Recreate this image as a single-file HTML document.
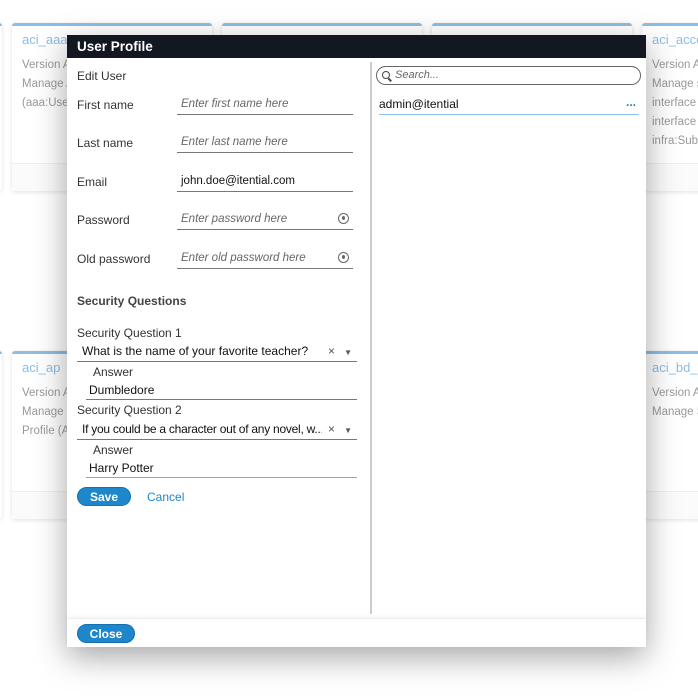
<!DOCTYPE html>
<html><head><style>
*{box-sizing:border-box;margin:0;padding:0}
body{width:698px;height:697px;background:#fff;font-family:"Liberation Sans",sans-serif;position:relative;overflow:hidden;font-size:12px;color:#222}
.card{position:absolute;background:#fff;border-top:3px solid #8dbde2;border-radius:3px;box-shadow:0 1px 4px rgba(0,0,0,.12)}
.card .t{color:#8dbde2;font-size:13px;position:absolute;left:10px;top:6px;white-space:nowrap}
.card .l{color:#999;font-size:11.5px;position:absolute;left:10px;white-space:nowrap}
.card .f{position:absolute;left:0;right:0;bottom:0;height:28px;border-top:1px solid #eee;background:#fbfbfb}
.modal{position:absolute;left:67px;top:35px;width:579px;height:612px;background:#fff;box-shadow:0 10px 30px rgba(0,0,0,.35)}
.hdr{height:23px;background:#131722;color:#fff;font-size:13.5px;font-weight:bold;padding:4px 10px}
.a{position:absolute;white-space:nowrap}
.lbl{font-size:12px;color:#333}
.inp{position:absolute;left:110px;width:176px;border-bottom:1px solid #777;height:21px;font-size:11.5px;padding:4px 4px;color:#666;font-style:italic}
.btn{position:absolute;background:#1e87cc;color:#fff;font-weight:bold;border-radius:10px;font-size:12px;text-align:center;line-height:18px;border:1px solid #1670b0}
.eye{position:absolute;right:4px;top:4px;width:11px;height:11px;border:1.3px solid #666;border-radius:50%}
.eye:after{content:"";position:absolute;left:3px;top:2px;width:3px;height:4px;background:#666;border-radius:50%}
.sel{position:absolute;left:10px;width:280px;height:22px;border-bottom:1px solid #777;font-size:12px;padding:4px 5px;color:#111;white-space:nowrap}
.sel .tx{display:block;width:240px;overflow:hidden;white-space:nowrap}
</style></head><body>
<div class="card" style="left:-190px;top:23px;width:192px;height:168px"></div>
<div class="card" style="left:12px;top:23px;width:200px;height:168px"><div class="t">aci_aaa</div><div class="l" style="top:33px">Version A</div><div class="l" style="top:52px">Manage A</div><div class="l" style="top:71px">(aaa:User</div><div class="f"></div></div>
<div class="card" style="left:222px;top:23px;width:200px;height:168px"></div>
<div class="card" style="left:432px;top:23px;width:200px;height:168px"></div>
<div class="card" style="left:642px;top:23px;width:200px;height:168px"><div class="t">aci_acce</div><div class="l" style="top:33px">Version A</div><div class="l" style="top:52px">Manage s</div><div class="l" style="top:71px">interface</div><div class="l" style="top:90px">interface</div><div class="l" style="top:109px">infra:Subl</div><div class="f"></div></div>
<div class="card" style="left:-190px;top:351px;width:192px;height:168px"></div>
<div class="card" style="left:12px;top:351px;width:200px;height:168px"><div class="t">aci_ap</div><div class="l" style="top:33px">Version A</div><div class="l" style="top:52px">Manage t</div><div class="l" style="top:71px">Profile (A</div><div class="f"></div></div>
<div class="card" style="left:642px;top:351px;width:200px;height:168px"><div class="t">aci_bd_s</div><div class="l" style="top:33px">Version A</div><div class="l" style="top:52px">Manage S</div><div class="f"></div></div>

<div class="modal">
<div class="hdr">User Profile</div>
<div class="a lbl" style="left:10px;top:34px">Edit User</div>
<div class="a lbl" style="left:10px;top:63px">First name</div>
<div class="inp" style="top:59px">Enter first name here</div>
<div class="a lbl" style="left:10px;top:101px">Last name</div>
<div class="inp" style="top:97px">Enter last name here</div>
<div class="a lbl" style="left:10px;top:140px">Email</div>
<div class="inp" style="top:136px;font-style:normal;color:#111">john.doe@itential.com</div>
<div class="a lbl" style="left:10px;top:178px">Password</div>
<div class="inp" style="top:174px">Enter password here<span class="eye"></span></div>
<div class="a lbl" style="left:10px;top:217px">Old password</div>
<div class="inp" style="top:213px">Enter old password here<span class="eye"></span></div>
<div class="a lbl" style="left:10px;top:259px;font-weight:bold;color:#444">Security Questions</div>
<div class="a lbl" style="left:10px;top:291px">Security Question 1</div>
<div class="sel" style="top:305px"><span class="tx">What is the name of your favorite teacher?</span><span style="position:absolute;right:22px;top:4px;color:#555">×</span><span style="position:absolute;right:5px;font-size:8px;top:8px;color:#555">▼</span></div>
<div class="a lbl" style="left:26px;top:330px">Answer</div>
<div class="a" style="left:19px;top:345px;width:271px;height:20px;border-bottom:1px solid #777;font-size:12px;padding:3px 3px;color:#111">Dumbledore</div>
<div class="a lbl" style="left:10px;top:368px">Security Question 2</div>
<div class="sel" style="top:383px"><span class="tx" style="letter-spacing:-0.25px">If you could be a character out of any novel, w...</span><span style="position:absolute;right:22px;top:4px;color:#555">×</span><span style="position:absolute;right:5px;font-size:8px;top:8px;color:#555">▼</span></div>
<div class="a lbl" style="left:26px;top:408px">Answer</div>
<div class="a" style="left:19px;top:423px;width:271px;height:20px;border-bottom:1px solid #e8877a;font-size:12px;padding:3px 3px;color:#111">Harry Potter</div>
<div class="btn" style="left:10px;top:452px;width:54px;height:19px">Save</div>
<div class="a" style="left:80px;top:455px;color:#1e87cc;font-size:12px">Cancel</div>
<div class="a" style="left:303px;top:27px;width:2px;height:552px;background:#ccc"></div>
<div class="a" style="left:309px;top:31px;width:265px;height:19px;border:1px solid #666;border-radius:10px;font-size:11px;font-style:italic;color:#666;padding:2px 0 0 18px"><span style="position:absolute;left:5px;top:4px;width:8px;height:8px;border:1.4px solid #444;border-radius:50%"></span><span style="position:absolute;left:11px;top:12px;width:4px;height:1.5px;background:#444;transform:rotate(45deg)"></span>Search...</div>
<div class="a" style="left:312px;top:62px;width:260px;height:18px;border-bottom:1px solid #8dbde2;font-size:12px;color:#111">admin@itential<span style="position:absolute;right:3px;color:#1e87cc;font-weight:bold;top:-2px">...</span></div>
<div class="a" style="left:0;top:583px;width:579px;height:29px;border-top:1px solid #eee;box-shadow:0 -2px 4px rgba(0,0,0,.04)"></div>
<div class="btn" style="left:10px;top:589px;width:58px;height:19px">Close</div>
</div>
</body></html>
